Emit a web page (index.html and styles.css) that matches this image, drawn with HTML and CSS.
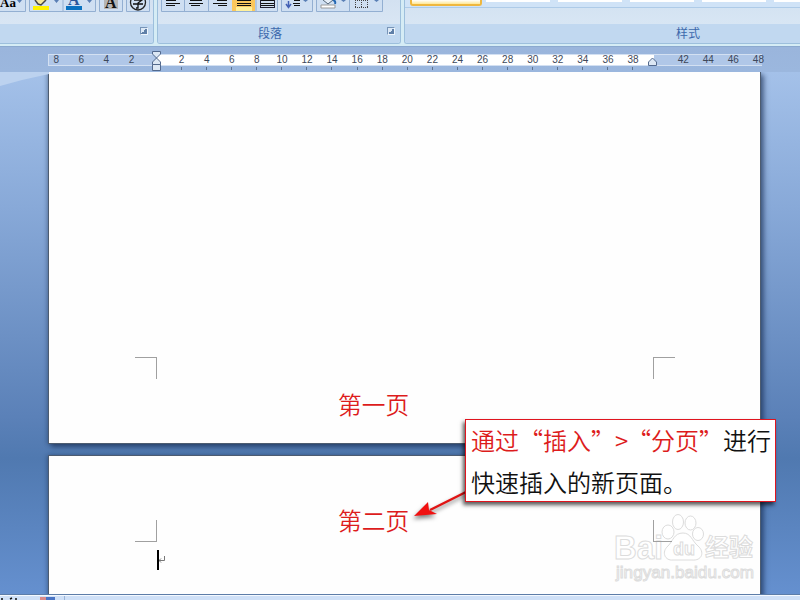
FILE: index.html
```html
<!DOCTYPE html>
<html lang="zh-CN">
<head>
  <meta charset="UTF-8" />
  <title>文档</title>
  <link rel="stylesheet" href="styles.css">
</head>
<body>
  <div class="ribbon">
    <div class="group font-group">
      <div class="tools">
        <svg class="icons" width="152" height="13" viewBox="0 0 152 13">
          <g class="frame">
            <path d="M-2 -2H25.500V11.500H-2z"/>
            <path d="M29.500 -2H95.500V11.500H29.500zM63 0V11"/>
            <path d="M99.500 -2H122.500V11.500H99.500z"/>
            <path d="M126.500 -2H149.500V11.500H126.500z"/>
          </g>
          <text class="aa" x="0" y="7">Aa</text>
          <path class="drop" d="M17 0h5l-2.500 3zM54 0h5l-2.500 3zM87 0h5l-2.500 3z"/>
          <path d="M35 0l3 4 3 1 5-5" fill="#f5e79c" stroke="#444" stroke-width="1.500"/>
          <path d="M33 6H49V10H33z" fill="#fff200"/>
          <text class="letter" x="68" y="5" fill="#2b579a">A</text>
          <path d="M66 6H82V10H66z" fill="#0a72c0"/>
          <path d="M104 -2H118V9H104z" fill="#b5b5b5"/>
          <text class="letter" x="105" y="8" fill="#111">A</text>
          <circle cx="138" cy="2.500" r="7.500" fill="none" stroke="#222" stroke-width="1.300"/>
          <path d="M134 0H142L138 3V8H136M133 4H143" fill="none" stroke="#111" stroke-width="1.300"/>
        </svg>
      </div>
      <div class="caption"><span></span><i class="launcher"></i></div>
    </div>
    <div class="group para-group">
      <div class="tools">
        <svg class="icons" width="241" height="13" viewBox="158 0 241 13">
          <g class="frame">
            <path d="M161.500 -2H277.500V11.500H161.500zM184.500 0V11M208.500 0V11M256 0V11"/>
            <path d="M281.500 -2H312.500V11.500H281.500z"/>
            <path d="M316.500 -2H382.500V11.500H316.500zM349.500 0V11"/>
          </g>
          <path d="M232 0H255V11H232z" fill="#fbc75c"/>
          <path d="M236 7H252V11H236z" fill="#fff09a"/>
          <path class="lines" d="M166 .5H176M166 3.500H180M166 5.500H175M190 .5H202M189 3.500H203M191 5.500H200M217 .5H227M213 3.500H227M218 5.500H227M237 .5H251M237 3.500H251M237 5.500H251M261 .5H274M261 3.500H274M261 5.500H274"/>
          <path d="M260.500 0V8M274.500 0V8M261 7.500H274" stroke="#223" fill="none"/>
          <path class="lines" d="M293 3.500H300M294 5.500H300M294 .5H300"/>
          <path d="M288.500 1V7M286 4L288.500 7.500 291 4" fill="none" stroke="#4361b5" stroke-width="1.500"/>
          <path class="drop" d="M303 0h5l-2.500 2zM341 0h5l-2.500 2zM374 0h5l-2.500 2z"/>
          <path d="M321 5h14v3h-14z" fill="#fff" stroke="#999"/>
          <path d="M323 0l5 4 5-4" fill="#e6eef8" stroke="#567"/>
          <path d="M333 0q3 1 2 4" stroke="#2467b2" stroke-width="2" fill="none"/>
          <path d="M355 .5h13M355 7.500h13M355.500 0v8M361.500 0v8M367.500 0v8" stroke="#444" stroke-dasharray="1 1" fill="none"/>
        </svg>
      </div>
      <div class="caption"><span>段落</span><i class="launcher"></i></div>
    </div>
    <div class="group style-group">
      <div class="tools gallery">
        <div class="style-item selected"></div>
        <div class="style-item"></div>
        <div class="style-item"></div>
        <div class="style-item"></div>
        <div class="style-item"></div>
        <div class="style-item"></div>
      </div>
      <div class="caption"><span>样式</span></div>
    </div>
  </div>

  <div class="ruler">
    <div class="scale">
      <span>8</span><span>6</span><span>4</span><span>2</span><span></span>
      <span>2</span><span>4</span><span>6</span><span>8</span><span>10</span>
      <span>12</span><span>14</span><span>16</span><span>18</span><span>20</span>
      <span>22</span><span>24</span><span>26</span><span>28</span><span>30</span>
      <span>32</span><span>34</span><span>36</span><span>38</span><span></span>
      <span>42</span><span>44</span><span>46</span><span>48</span>
    </div>
    <div class="ticks"></div>
    <svg class="indent left" width="11" height="22" viewBox="0 0 11 22">
      <path d="M1.500 1.500H9.500V4L5.500 8 9.500 12V14.500H1.500V12L5.500 8 1.500 4z"/>
      <path d="M1.500 14.500H9.500V20.500H1.500z"/>
    </svg>
    <svg class="indent right" width="11" height="10" viewBox="0 0 11 10">
      <path d="M1.500 8.500V5L5.500 1 9.500 5V8.500z"/>
    </svg>
  </div>

  <div class="workspace">
    <svg class="swoosh" width="49" height="15" viewBox="0 0 49 15"><path d="M0 0H49V2Q24 7 0 14z"/></svg>
    <div class="page first">
      <div class="corners bottom"><i></i><i></i></div>
      <div class="page-name">第一页</div>
    </div>
    <div class="page second">
      <div class="page-name">第二页</div>
      <div class="corners top"><i></i><i></i></div>
      <div class="line">
        <b class="cursor"></b>
        <svg width="7" height="8" viewBox="0 0 7 8"><path d="M5.500 0V4.500H0M2 2.500L0 4.500 2 6.500" fill="none" stroke="#777"/></svg>
      </div>
    </div>

    <svg class="watermark" width="150" height="75" viewBox="0 0 150 75">
      <g class="mark">
        <text x="2" y="46" font-size="33" font-weight="bold" textLength="49" lengthAdjust="spacingAndGlyphs">Bai</text>
        <ellipse cx="56" cy="19" rx="6" ry="7"/>
        <ellipse cx="66" cy="9" rx="5.500" ry="7.500"/>
        <ellipse cx="78.500" cy="10" rx="5.500" ry="7"/>
        <ellipse cx="86" cy="21" rx="5.500" ry="6.500"/>
        <path d="M71 20C62 20 61 28 56 33C49 39 53 48 61 47H80C90 48 93 39 86 33C80 28 79 20 71 20z"/>
        <text x="61" y="42" font-size="19" font-weight="bold" textLength="22" lengthAdjust="spacingAndGlyphs">du</text>
        <text x="93" y="43" font-size="24" font-weight="bold" textLength="48">经验</text>
        <text x="4" y="65" font-size="17" textLength="138" lengthAdjust="spacingAndGlyphs">jingyan.baidu.com</text>
      </g>
      <path d="M41.500 7V28.500H60" fill="none" stroke="#a0a0a0"/>
    </svg>

    <svg class="arrow" width="60" height="40" viewBox="0 0 60 40">
      <path d="M58 6L20 25" stroke="#e01414" stroke-width="2.400"/>
      <path d="M4 31L18 17 19 25 27 29z" fill="#f01010"/>
    </svg>

    <div class="callout">
      <p><em>通过“插入”<span class="gt">&gt;</span>“分页”</em>进行</p>
      <p>快速插入的新页面。</p>
    </div>
  </div>

  <div class="status">
    <svg width="70" height="4" viewBox="0 0 70 4">
      <path d="M1 3h2M10 3l2-1M16 2v2" stroke="#111" stroke-width="1.500"/>
      <path d="M40 1h7v3h-7z" fill="#d98a8a"/>
      <path d="M46 1h9v3h-9z" fill="#4a74c4"/>
      <path d="M64.500 0v4" stroke="#9ab4d8"/>
    </svg>
  </div>
</body>
</html>
```
FILE: styles.css
```css
* { box-sizing: border-box; }

body {
  margin: 0;
  width: 800px;
  height: 600px;
  overflow: hidden;
  display: flex;
  flex-direction: column;
  font-family: "Liberation Sans", "Noto Sans CJK SC", sans-serif;
  background: #a0bbe0;
}

/* ribbon */
.ribbon {
  display: flex;
  flex: none;
  height: 47px;
  gap: 3px;
  padding-bottom: 3px;
  background: #d5ecf5;
  border-bottom: 1px solid #8ba9cf;
}

.group {
  display: flex;
  flex-direction: column;
  height: 44px;
  border: 1px solid #9dbfdc;
  border-top: none;
  border-radius: 0 0 3px 3px;
  overflow: hidden;
}

.font-group { width: 154px; border-left: none; border-bottom-left-radius: 0; }
.para-group { width: 244px; }
.style-group { flex: 1; border-right: none; border-bottom-right-radius: 0; }

.tools {
  flex: none;
  height: 24px;
  background: linear-gradient(#d3e1f1, #d9e6f4);
}

.icons { display: block; }

.frame path {
  fill: #cfdff2;
  stroke: #93afd2;
}

.aa, .letter {
  font-family: "Liberation Serif", serif;
  font-weight: bold;
  font-size: 13px;
}

.letter { font-size: 16px; }
.drop { fill: #5a7fb5; }
.lines { stroke: #111; stroke-width: 1.2; }

.caption {
  flex: 1;
  display: flex;
  align-items: center;
  background: #c1d8f0;
  color: #3c68ac;
  font-size: 12px;
}

.caption span {
  flex: 1;
  text-align: center;
  line-height: 18px;
  padding-top: 1px;
}

.para-group .caption span { padding-right: 5px; }
.style-group .caption span { padding-left: 171px; }

.launcher {
  width: 8px;
  height: 8px;
  margin: 0 5px 5px 0;
  border: 1px solid #7895b8;
  border-right-color: #eef5fc;
  border-bottom-color: #eef5fc;
  background: linear-gradient(135deg, #dbe8f6 50%, #5f7fa8 50%);
}

.gallery {
  display: flex;
  gap: 8px;
  padding-left: 5px;
  align-items: flex-start;
  background: linear-gradient(#d0e3f7 7px, #aecbe8 7px, #aecbe8 8px, #d4e3f2 8px, #d8e6f4);
}

.style-item {
  flex: none;
  width: 64px;
  height: 2px;
  background: #fff;
}

.style-item.selected {
  width: 72px;
  height: 6px;
  margin-right: -4px;
  border: 2px solid #efb73e;
  border-top: none;
  border-radius: 0 0 3px 3px;
  background: linear-gradient(#fff, #ffe795);
}

/* ruler */
.ruler {
  position: relative;
  flex: none;
  height: 25px;
  padding: 7px 38px 0 48px;
  background: linear-gradient(#9ab5dc, #9bb7de);
}

.scale {
  display: flex;
  height: 12px;
  border: 1px solid #d3e0f2;
  border-width: 1px 0 1px 1px;
  background: linear-gradient(90deg, #b0c7e8 108px, #fff 108px, #fff 605px, #b0c7e8 605px);
}

.scale span {
  flex: none;
  width: 25.08px;
  text-align: center;
  font-size: 10px;
  line-height: 10px;
  color: #3d4859;
}

.scale span:first-child { margin-left: -5.3px; }

.ticks {
  height: 3px;
  margin: 1px 109px 0 133px;
  background: repeating-linear-gradient(90deg, #5d7390 0 1px, transparent 1px 25.08px);
}

.indent {
  position: absolute;
  fill: #dce7f4;
  stroke: #53698d;
}

.left { left: 151px; top: 3px; }
.right { left: 647px; top: 10px; }

/* document area */
.workspace {
  position: relative;
  flex: none;
  height: 522px;
  padding: 0 39px 0 48px;
  overflow: hidden;
  background: linear-gradient(#a4c1e9, #88a9d8 26%, #5b81b8 66%, #5079b0 74%, #6590cf);
}

.swoosh {
  position: absolute;
  left: 0;
  top: 0;
  fill: #bcd2ef;
}

.page {
  display: flex;
  flex-direction: column;
  width: 713px;
  background: #fefefe;
  border: 1px solid #4d5c70;
  box-shadow: 3px 3px 5px rgba(20, 40, 75, .6), -1px 0 4px rgba(20, 40, 75, .35);
}

.first {
  height: 372px;
  padding-top: 285px;
  border-top: none;
}

.second {
  height: 151px;
  margin-top: 11px;
  padding-top: 46px;
}

.corners {
  display: flex;
  justify-content: space-between;
  height: 22px;
  padding: 0 85px 0 86px;
}

.corners i {
  width: 22px;
  height: 22px;
  border: 0 solid #a0a0a0;
}

.bottom i { border-top-width: 1px; }
.top i { border-bottom-width: 1px; }
.corners i:first-child { border-right-width: 1px; }
.corners i:last-child { border-left-width: 1px; }

.page-name {
  padding-left: 289px;
  height: 36px;
  line-height: 36px;
  font-family: "Noto Sans CJK SC", sans-serif;
  font-weight: 350;
  font-size: 23.7px;
  color: #dd1c1c;
}

.first .page-name { margin-top: 7px; }
.second .page-name { margin-bottom: -18px; }

.line {
  display: flex;
  align-items: center;
  margin: 8px 0 0 108px;
}

.cursor {
  width: 2px;
  height: 20px;
  background: #000;
}

.callout {
  position: absolute;
  left: 465px;
  top: 347px;
  width: 311px;
  height: 83px;
  padding: 0 0 0 5px;
  background: #fff;
  border: 1px solid #e0141e;
  box-shadow: -2px 3px 4px rgba(0, 0, 0, .65);
  font-family: "Noto Sans CJK SC", sans-serif;
  font-weight: 350;
  font-size: 24px;
  color: #111;
  white-space: nowrap;
}

.callout p {
  margin: 0;
  height: 42px;
  line-height: 40px;
}

.callout em {
  font-style: normal;
  color: #dd1c1c;
}

.gt {
  display: inline-block;
  width: 12px;
}

.arrow {
  position: absolute;
  left: 410px;
  top: 413px;
  filter: drop-shadow(-1px 3px 2px rgba(0, 0, 0, .5));
}

.watermark {
  position: absolute;
  left: 612px;
  top: 441px;
}

.mark {
  fill: #fff;
  stroke: #dcdcdc;
  stroke-width: 1;
}

/* status bar */
.status {
  flex: none;
  height: 6px;
  padding-top: 1px;
  border-top: 1px solid #5d7da8;
  background: linear-gradient(#f4f9ff 1px, #cfe0f7 1px);
}

.status svg { display: block; }
```
